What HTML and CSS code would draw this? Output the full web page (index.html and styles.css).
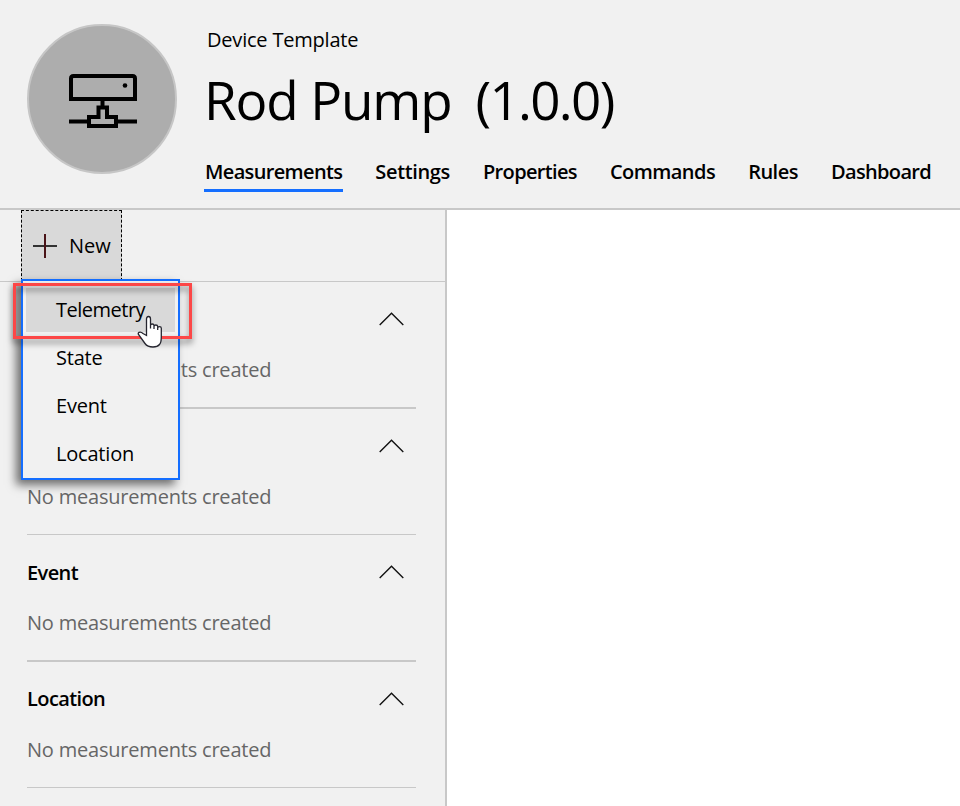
FILE: index.html
```html
<!DOCTYPE html>
<html lang="en">
<head>
<meta charset="utf-8">
<title>Device Template</title>
<link rel="stylesheet" href="styles.css">
</head>
<body>
<header class="header">
  <div class="avatar">
    <svg width="68" height="56" viewBox="0 0 68 56" fill="none" stroke="#000" stroke-width="4">
      <path d="M2 25V4.500Q2 2 4.500 2H63.500Q66 2 66 4.500V25Z"/>
      <circle cx="56" cy="11.500" r="2.300" fill="#000" stroke="none"/>
      <path d="M33.500 26V33M0 47.500H20M47 47.500H68M20 52V43H29.500V33.500H38V43H47V52Z"/>
    </svg>
  </div>
  <div class="heading">
    <div class="kind">Device Template</div>
    <h1 class="title"><span class="name">Rod Pump</span><span class="version">(1.0.0)</span></h1>
    <nav class="tabs">
      <a class="tab active">Measurements</a>
      <a class="tab settings">Settings</a>
      <a class="tab properties">Properties</a>
      <a class="tab commands">Commands</a>
      <a class="tab rules">Rules</a>
      <a class="tab dashboard">Dashboard</a>
    </nav>
  </div>
</header>
<main class="main">
  <aside class="sidebar">
    <div class="toolbar">
      <button class="new">
        <svg width="24" height="24" viewBox="0 0 24 24" stroke-width="2"><path d="M0 12H24" stroke="#333"/><path d="M12 0V24" stroke="#4a1418"/></svg>
        <span>New</span>
      </button>
      <div class="menu">
        <div class="item selected">Telemetry</div>
        <div class="item state">State</div>
        <div class="item event">Event</div>
        <div class="item location">Location</div>
      </div>
      <div class="callout"></div>
      <svg class="cursor" width="27" height="34" viewBox="0 0 27 34"><path d="M9.500 20.500V4Q9.500 1.500 11.500 1.500T13.500 4V13.500V10.500Q13.500 9 15.200 9T17 10.500V14V11.500Q17 10 18.800 10T20.700 11.500V15V13Q20.700 11.700 22.500 11.700T24.300 13.300V22Q24.300 27.500 22.500 29.500Q20.500 32 16 32Q10.500 32 8 28.500L1.500 19.500Q.8 18 2 17.300Q4 16.500 6 18.500Z" fill="#fff" stroke="#25252f" stroke-width="1.300"/></svg>
    </div>
    <section class="group thick">
      <div class="group-head"><h2>Telemetry</h2><svg class="chevron" width="25" height="14" viewBox="0 0 25 14"><path d="M.7 13L12.500 1.200L24.300 13"/></svg></div>
      <p>No measurements created</p>
    </section>
    <section class="group">
      <div class="group-head"><h2>State</h2><svg class="chevron" width="25" height="14" viewBox="0 0 25 14"><path d="M.7 13L12.500 1.200L24.300 13"/></svg></div>
      <p>No measurements created</p>
    </section>
    <section class="group thick">
      <div class="group-head"><h2 class="event-title">Event</h2><svg class="chevron" width="25" height="14" viewBox="0 0 25 14"><path d="M.7 13L12.500 1.200L24.300 13"/></svg></div>
      <p>No measurements created</p>
    </section>
    <section class="group">
      <div class="group-head"><h2>Location</h2><svg class="chevron" width="25" height="14" viewBox="0 0 25 14"><path d="M.7 13L12.500 1.200L24.300 13"/></svg></div>
      <p>No measurements created</p>
    </section>
  </aside>
  <div class="canvas"></div>
</main>
</body>
</html>
```
FILE: styles.css
```css
* { box-sizing: border-box; }
body {
  margin: 0;
  height: 806px;
  overflow: hidden;
  display: flex;
  flex-direction: column;
  background: #fff;
  color: #000;
  font: 20px/28px "Open Sans", "Noto Sans", sans-serif;
}
.header {
  height: 210px;
  flex: none;
  display: flex;
  padding: 24px 0 0 27px;
  background: #f1f1f1;
  border-bottom: 2px solid #c8c8c8;
}
.avatar {
  width: 150px;
  height: 150px;
  flex: none;
  display: flex;
  align-items: center;
  justify-content: center;
  padding: 6px 0 0 2px;
  border: 2px solid #c6c6c6;
  border-radius: 50%;
  background: #adadad;
}
.heading { padding-left: 27px; }
.kind { padding-left: 3px; margin-top: 2px; letter-spacing: -.2px; }
.title {
  margin: 6px 0 0;
  height: 80px;
  display: flex;
  gap: 24px;
  font-size: 53px;
  line-height: 80px;
  font-weight: 400;
}
.name { letter-spacing: -1.15px; }
.version { letter-spacing: -1.7px; }
.tabs { display: flex; gap: 31px; margin-top: 18px; }
.tab {
  height: 34px;
  padding: 0 1px;
  line-height: 28px;
  font-weight: 600;
  letter-spacing: -.65px;
  white-space: nowrap;
}
.tab.active { border-bottom: 3px solid #146eff; }
.tab.settings { letter-spacing: -.35px; }
.tab.commands { letter-spacing: -.55px; }
.tab.rules { letter-spacing: -.5px; }
.main { flex: 1; display: flex; min-height: 0; }
.sidebar {
  width: 447px;
  flex: none;
  background: #f1f1f1;
  border-right: 2px solid #c8c8c8;
}
.toolbar {
  position: relative;
  height: 72px;
  padding-left: 21px;
  border-bottom: 1px solid #c8c8c8;
}
.new {
  width: 101px;
  height: 71px;
  display: flex;
  align-items: center;
  gap: 12px;
  padding: 0 0 0 11px;
  border: 1px dashed #000;
  background: #d9d9d9;
  color: #000;
  font: inherit;
}
.menu {
  position: absolute;
  z-index: 2;
  left: 21px;
  top: 69px;
  width: 159px;
  height: 201px;
  padding: 7px 3px;
  border: 2px solid #146eff;
  background: #f1f1f1;
  box-shadow: -5px 5px 9px rgba(0, 0, 0, .55);
}
.item { height: 44px; margin-bottom: 4px; padding-left: 30px; line-height: 44px; letter-spacing: -.2px; }
.selected { background: #d9d9d9; letter-spacing: -.5px; }
.callout {
  position: absolute;
  z-index: 3;
  left: 13px;
  top: 73px;
  width: 179px;
  height: 56px;
  border: 3px solid #fc4747;
  filter: drop-shadow(0 4px 3px rgba(0, 0, 0, .5));
}
.cursor { position: absolute; z-index: 4; left: 137px; top: 105px; }
.group {
  height: 126px;
  margin: 0 29px 0 27px;
  padding-top: 23px;
  border-bottom: 1px solid #c8c8c8;
}
.group.thick { height: 127px; border-bottom-width: 2px; }
.group-head { height: 28px; display: flex; justify-content: space-between; padding-right: 12px; }
.group h2 { margin: 0; font: inherit; font-weight: 600; letter-spacing: -.6px; }
.group .event-title { padding-top: 1px; }
.group p { margin: 23px 0 0; color: #666; letter-spacing: -.2px; }
.chevron { margin-top: 7px; fill: none; stroke: #111; stroke-width: 1.4; }
.canvas { flex: 1; background: #fff; }
```
